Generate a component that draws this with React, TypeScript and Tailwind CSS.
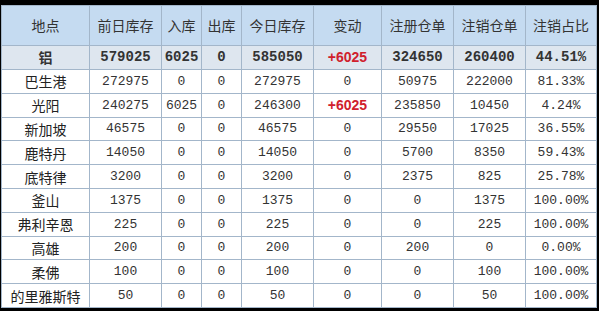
const cols = [88, 72, 40, 40, 72, 68, 72, 72, 71];

const head = ['地点', '前日库存', '入库', '出库', '今日库存', '变动', '注册仓单', '注销仓单', '注销占比'];

const total = ['铝', '579025', '6025', '0', '585050', '+6025', '324650', '260400', '44.51%'];

const rows = [
  ['巴生港', '272975', '0', '0', '272975', '0', '50975', '222000', '81.33%'],
  ['光阳', '240275', '6025', '0', '246300', '+6025', '235850', '10450', '4.24%'],
  ['新加坡', '46575', '0', '0', '46575', '0', '29550', '17025', '36.55%'],
  ['鹿特丹', '14050', '0', '0', '14050', '0', '5700', '8350', '59.43%'],
  ['底特律', '3200', '0', '0', '3200', '0', '2375', '825', '25.78%'],
  ['釜山', '1375', '0', '0', '1375', '0', '0', '1375', '100.00%'],
  ['弗利辛恩', '225', '0', '0', '225', '0', '0', '225', '100.00%'],
  ['高雄', '200', '0', '0', '200', '0', '200', '0', '0.00%'],
  ['柔佛', '100', '0', '0', '100', '0', '0', '100', '100.00%'],
  ['的里雅斯特', '50', '0', '0', '50', '0', '0', '50', '100.00%'],
];

const cjk = "font-['Noto_Sans_CJK_SC',sans-serif]";
const mono = "font-['Liberation_Mono','Noto_Sans_CJK_SC',monospace]";
const red = "text-[#d0202c] font-bold text-[14px] font-['Liberation_Sans',sans-serif]";

export default function App() {
  return (
    <div className="w-[599px] h-[311px] bg-black pt-[5px] pl-[1px] pr-[3px]">
      <table className="table-fixed border-collapse w-[595px] text-[#222] bg-white">
        <colgroup>
          {cols.map((w, i) => (
            <col key={i} style={{ width: w }} />
          ))}
        </colgroup>
        <thead>
          <tr className="h-[40px] bg-[#c5dbf1]">
            {head.map((h, i) => (
              <th key={i} className={`border border-[#a3b6ca] font-normal text-[14px] text-[#333] ${cjk}`}>
                {h}
              </th>
            ))}
          </tr>
        </thead>
        <tbody>
          <tr className="h-[24px] bg-[#dee6ef]">
            {total.map((c, i) => (
              <td
                key={i}
                className={`border border-[#a3b6ca] text-center font-bold text-[14px] ${
                  c.startsWith('+') ? red : `${i === 0 ? cjk : mono} text-[#333]`
                }`}
              >
                {c}
              </td>
            ))}
          </tr>
          {rows.map((r, ri) => (
            <tr key={ri} className="h-[23.8px]">
              {r.map((c, i) => (
                <td
                  key={i}
                  className={`border border-[#a3b6ca] text-center leading-none ${
                    c.startsWith('+')
                      ? red
                      : i === 0
                        ? `text-[14px] ${cjk} text-[#222]`
                        : `text-[13px] ${mono} text-[#333]`
                  }`}
                >
                  {c}
                </td>
              ))}
            </tr>
          ))}
        </tbody>
      </table>
    </div>
  );
}
